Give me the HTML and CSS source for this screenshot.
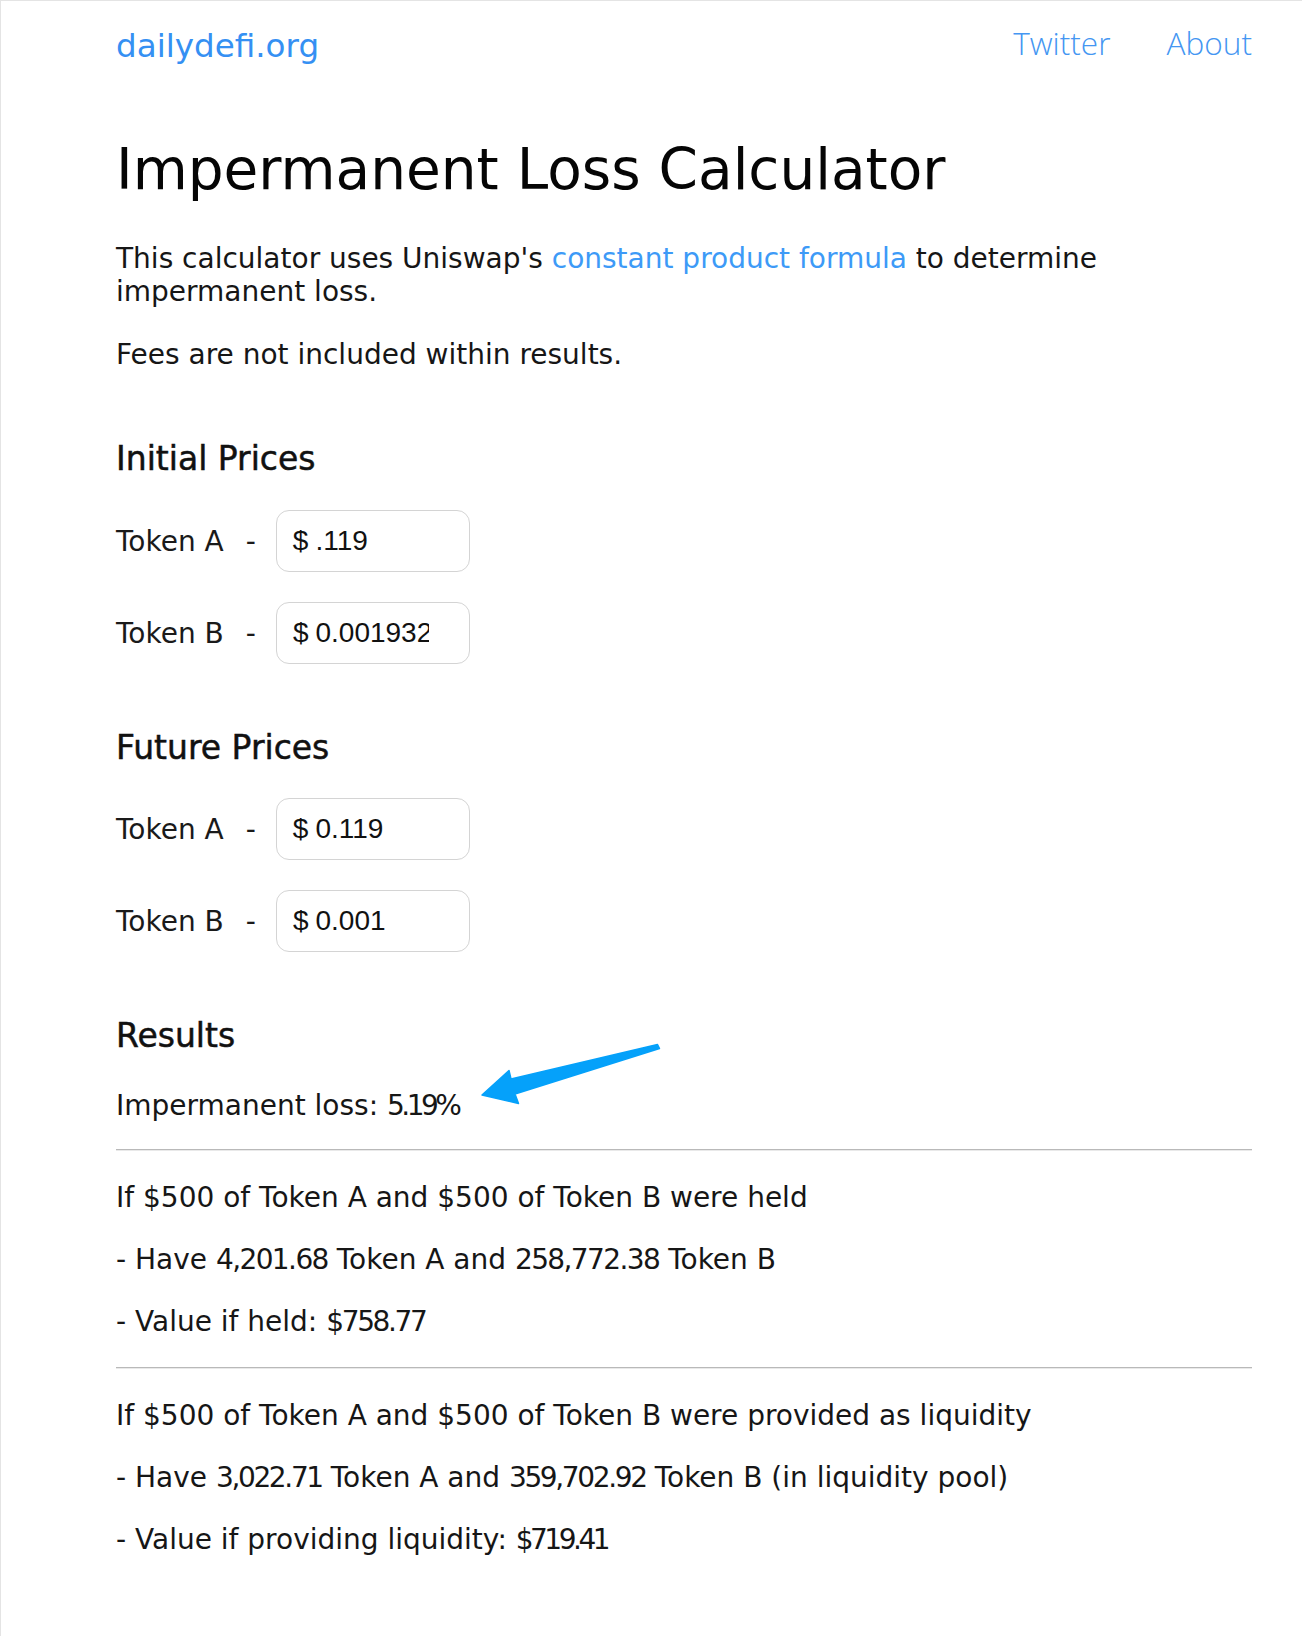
FILE: index.html
```html
<!DOCTYPE html>
<html lang="en">
<head>
<meta charset="utf-8">
<title>Impermanent Loss Calculator</title>
<link rel="stylesheet" href="styles.css">
</head>
<body>
<div class="page">
  <header class="topbar">
    <a class="logo" href="#">dailydefi.org</a>
    <nav class="nav">
      <a class="nav-link" href="#">Twitter</a>
      <a class="nav-link" href="#">About</a>
    </nav>
  </header>

  <main class="content">
    <h1 class="title">Impermanent Loss Calculator</h1>
    <p class="intro"><span>This calculator uses Uniswap's</span> <a class="inline-link" href="#">constant product formula</a> <span>to determine</span> <span>impermanent loss.</span></p>
    <p class="note">Fees are not included within results.</p>

    <section class="prices prices-initial">
      <h2 class="section-title">Initial Prices</h2>
      <div class="rows">
        <div class="row">
          <span class="token">Token A</span><span class="dash">-</span>
          <label class="field"><span class="cur">$</span><input class="num" type="text" value=".119"></label>
        </div>
        <div class="row">
          <span class="token">Token B</span><span class="dash">-</span>
          <label class="field"><span class="cur">$</span><input class="num" type="text" value="0.001932"></label>
        </div>
      </div>
    </section>

    <section class="prices prices-future">
      <h2 class="section-title">Future Prices</h2>
      <div class="rows">
        <div class="row">
          <span class="token">Token A</span><span class="dash">-</span>
          <label class="field"><span class="cur">$</span><input class="num" type="text" value="0.119"></label>
        </div>
        <div class="row">
          <span class="token">Token B</span><span class="dash">-</span>
          <label class="field"><span class="cur">$</span><input class="num" type="text" value="0.001"></label>
        </div>
      </div>
    </section>

    <section class="results">
      <h2 class="section-title">Results</h2>
      <p class="loss">Impermanent loss: <span class="n n-3">5.19%</span></p>
      <svg class="arrow" viewBox="475 1038 190 70" width="190" height="70" aria-hidden="true">
        <polygon points="482,1094 509,1069.5 511,1078 657.5,1043.5 659.5,1047.5 515,1093 518.5,1102.5" fill="#05a1fa" stroke="#05a1fa" stroke-width="1.5" stroke-linejoin="round"/>
      </svg>
      <hr class="divider divider-first">
      <p class="line">If $500 of Token A and $500 of Token B were held</p>
      <p class="line">- Have <span class="n n-1">4,201.68</span> Token A and <span class="n n-1">258,772.38</span> Token B</p>
      <p class="line">- Value if held: <span class="n n-2">$758.77</span></p>
      <hr class="divider">
      <p class="line">If $500 of Token A and $500 of Token B were provided as liquidity</p>
      <p class="line">- Have <span class="n n-2">3,022.71</span> Token A and <span class="n n-2">359,702.92</span> Token B (in liquidity pool)</p>
      <p class="line">- Value if providing liquidity: <span class="n n-3">$719.41</span></p>
    </section>
  </main>
</div>
</body>
</html>
```

FILE: styles.css
```css
html, body {
  margin: 0;
  padding: 0;
  background: #ffffff;
}

.page {
  box-sizing: border-box;
  min-height: 1636px;
  border-top: 1px solid #e4e4e4;
  border-left: 1px solid #e4e4e4;
  font-family: "DejaVu Sans", "Noto Sans", sans-serif;
  color: #161616;
}

.topbar {
  display: flex;
  justify-content: space-between;
  align-items: flex-start;
  padding: 22px 50px 0 115px;
}

.logo {
  margin-top: 3px;
  font-family: "DejaVu Sans", sans-serif;
  font-size: 32.6px;
  line-height: 40px;
  color: #3590f3;
  text-decoration: none;
}

.nav {
  display: flex;
  gap: 56px;
}

.nav-link {
  font-family: "Open Sans", "Noto Sans", sans-serif;
  font-weight: 300;
  font-size: 31.6px;
  line-height: 40px;
  color: #4496f2;
  text-decoration: none;
}

.content {
  padding: 0 50px 60px 115px;
}

.title {
  margin: 72px 0 0;
  font-size: 56.5px;
  line-height: 64px;
  font-weight: normal;
  color: #050505;
}

.intro,
.note,
.loss,
.line {
  font-size: 28px;
  line-height: 33px;
  margin: 0;
}

.intro {
  margin-top: 39.5px;
}

.note {
  margin-top: 30px;
}

.inline-link {
  color: #3d9af7;
  text-decoration: none;
}

.n-1 {
  letter-spacing: -1.6px;
}

.n-2 {
  letter-spacing: -2.35px;
}

.n-3 {
  letter-spacing: -3.5px;
}

.section-title {
  margin: 0;
  font-size: 33px;
  line-height: 40px;
  font-weight: normal;
  -webkit-text-stroke: 0.5px #111;
  color: #111;
}

.prices-initial {
  margin-top: 68.5px;
}

.prices-future {
  margin-top: 64px;
}

.rows {
  display: flex;
  flex-direction: column;
  gap: 30px;
  margin-top: 31px;
}

.prices-future .rows {
  margin-top: 30px;
}

.row {
  display: flex;
  align-items: center;
  height: 62px;
}

.token {
  font-size: 28px;
  color: #1a1a1a;
}

.dash {
  font-size: 28px;
  margin-left: 22px;
  color: #1a1a1a;
}

.field {
  box-sizing: border-box;
  display: flex;
  align-items: center;
  gap: 7px;
  width: 194px;
  height: 62px;
  margin-left: 20px;
  padding-left: 16px;
  border: 1px solid #d4d4d4;
  border-radius: 13px;
  font-family: "Liberation Sans", Arial, sans-serif;
  font-size: 28px;
  color: #111;
}

.cur {
  line-height: 1;
}

.num {
  width: 114px;
  padding: 0;
  border: 0;
  outline: 0;
  background: transparent;
  font: inherit;
  color: #111;
}

.results {
  position: relative;
  margin-top: 64px;
}

.loss {
  margin-top: 32.5px;
}

.arrow {
  position: absolute;
  left: 359px;
  top: 23px;
}

.divider {
  margin: 29px 0 29.5px;
  height: 0;
  border: 0;
  border-top: 1px solid #b9b9b9;
  border-bottom: 1px solid #e9e9e9;
}

.divider-first {
  margin: 27px 0 30.5px;
}

.line + .line {
  margin-top: 29px;
}
```
